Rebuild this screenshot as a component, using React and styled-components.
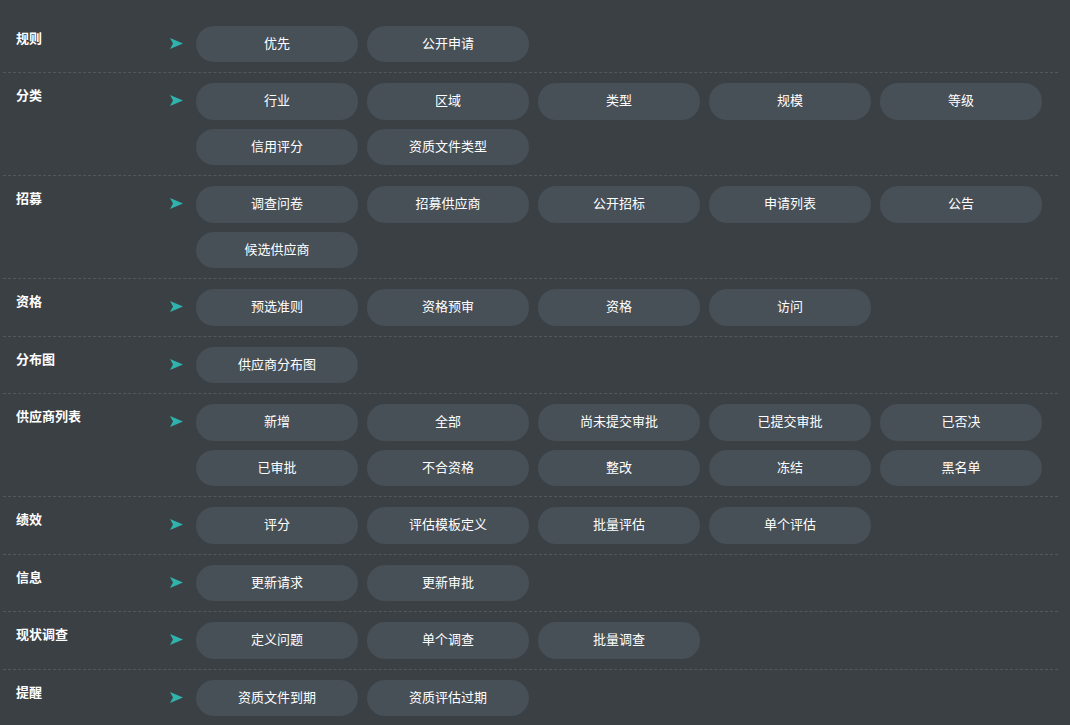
import React from "react";
import styled, { createGlobalStyle } from "styled-components";

const Global = createGlobalStyle`
  html, body { margin: 0; padding: 0; background: #3b4045; }
  body { font-family: "Microsoft YaHei", "Noto Sans CJK SC", "Noto Sans", sans-serif; }
`;

const Page = styled.div`
  min-height: 725px;
  background: #3b4045;
  padding: 15.5px 0 0 3px;
  box-sizing: border-box;
`;

const List = styled.div`
  width: 1055px;
`;

const Row = styled.div`
  display: flex;
  align-items: flex-start;
  padding: 10px 16px 10px 13px;
  border-top: ${(p) => (p.$first ? "none" : "1px dashed #51595f")};
`;

const Label = styled.div`
  width: 154px;
  flex: none;
  color: #ffffff;
  font-size: 13px;
  font-weight: 700;
  line-height: 24px;
`;

const Arrow = styled.svg`
  flex: none;
  width: 13px;
  height: 11px;
  margin: 12px 13px 0 0;
`;

const Grid = styled.div`
  display: grid;
  grid-template-columns: repeat(5, 162px);
  column-gap: 9px;
  row-gap: 9px;
`;

const Chip = styled.button`
  height: 36.5px;
  border: none;
  border-radius: 18px;
  background: #474f57;
  color: #ffffff;
  font-family: inherit;
  font-size: 13px;
  padding: 0 0 3px;
  cursor: pointer;
`;

const data = [
  ["规则", ["优先", "公开申请"]],
  ["分类", ["行业", "区域", "类型", "规模", "等级", "信用评分", "资质文件类型"]],
  ["招募", ["调查问卷", "招募供应商", "公开招标", "申请列表", "公告", "候选供应商"]],
  ["资格", ["预选准则", "资格预审", "资格", "访问"]],
  ["分布图", ["供应商分布图"]],
  ["供应商列表", ["新增", "全部", "尚未提交审批", "已提交审批", "已否决", "已审批", "不合资格", "整改", "冻结", "黑名单"]],
  ["绩效", ["评分", "评估模板定义", "批量评估", "单个评估"]],
  ["信息", ["更新请求", "更新审批"]],
  ["现状调查", ["定义问题", "单个调查", "批量调查"]],
  ["提醒", ["资质文件到期", "资质评估过期"]],
];

export default function App() {
  return (
    <Page>
      <Global />
      <List>
        {data.map(([label, items], i) => (
          <Row key={label} $first={i === 0}>
            <Label>{label}</Label>
            <Arrow viewBox="0 0 13 11">
              <path d="M0 0 L13 5.5 L0 11 L3 5.5 Z" fill="#2fb3ad" />
            </Arrow>
            <Grid>
              {items.map((t) => (
                <Chip key={t}>{t}</Chip>
              ))}
            </Grid>
          </Row>
        ))}
      </List>
    </Page>
  );
}
